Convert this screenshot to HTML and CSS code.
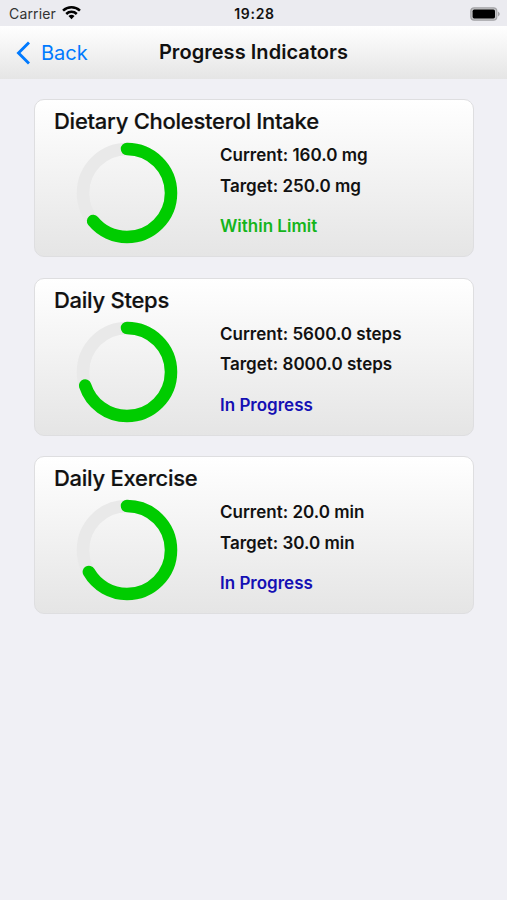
FILE: index.html
```html
<!DOCTYPE html>
<html lang="en">
<head>
    <meta charset="UTF-8">
    <meta name="viewport" content="width=device-width, initial-scale=1.0">
    <title>Progress Indicators</title>
    <link rel="stylesheet" href="styles.css">
</head>
<body>
    <div class="status-bar">
        <div class="carrier">
            <span>Carrier</span>
            <svg class="wifi" viewBox="0 0 18 14" width="19" height="15">
                <path d="M1 5.2a11.6 11.6 0 0 1 16 0M4 8.4a7.2 7.2 0 0 1 10 0" fill="none" stroke="#000" stroke-width="2.4"/>
                <path d="M9 13.4l-2.9-3a4.2 4.2 0 0 1 5.8 0z"/>
            </svg>
        </div>
        <span class="time">19:28</span>
        <svg class="battery" viewBox="0 0 30 14" width="30" height="14">
            <rect x=".8" y=".8" width="26" height="12.4" rx="3.4" fill="#c4c4c7" stroke="#a3a3a6" stroke-width="1.2"/>
            <rect x="2.6" y="2.6" width="22.4" height="8.8" rx="1.6"/>
            <path d="M28 4.6q3.6 2.4 0 4.8z" fill="#a3a3a6"/>
        </svg>
    </div>

    <header class="nav-bar">
        <a class="back" href="#">
            <svg viewBox="0 0 14 24" width="14" height="24">
                <path d="M13 1.5L2.500 12L13 22.500" fill="none" stroke="#007aff" stroke-width="2.900"/>
            </svg>
            <span>Back</span>
        </a>
        <h1>Progress Indicators</h1>
    </header>

    <main class="cards">
        <section class="card">
            <h2>Dietary Cholesterol Intake</h2>
            <div class="card-body">
                <svg class="ring" viewBox="0 0 102 102">
                    <circle class="track" cx="51" cy="51" r="44"/>
                    <circle class="progress" cx="51" cy="51" r="44" pathLength="100" stroke-dasharray="64 100"/>
                </svg>
                <div class="details">
                    <p>Current: 160.0 mg</p>
                    <p>Target: 250.0 mg</p>
                    <p class="status within-limit">Within Limit</p>
                </div>
            </div>
        </section>

        <section class="card">
            <h2>Daily Steps</h2>
            <div class="card-body">
                <svg class="ring" viewBox="0 0 102 102">
                    <circle class="track" cx="51" cy="51" r="44"/>
                    <circle class="progress" cx="51" cy="51" r="44" pathLength="100" stroke-dasharray="70 100"/>
                </svg>
                <div class="details">
                    <p>Current: 5600.0 steps</p>
                    <p>Target: 8000.0 steps</p>
                    <p class="status in-progress">In Progress</p>
                </div>
            </div>
        </section>

        <section class="card">
            <h2>Daily Exercise</h2>
            <div class="card-body">
                <svg class="ring" viewBox="0 0 102 102">
                    <circle class="track" cx="51" cy="51" r="44"/>
                    <circle class="progress" cx="51" cy="51" r="44" pathLength="100" stroke-dasharray="66.67 100"/>
                </svg>
                <div class="details">
                    <p>Current: 20.0 min</p>
                    <p>Target: 30.0 min</p>
                    <p class="status in-progress">In Progress</p>
                </div>
            </div>
        </section>
    </main>
</body>
</html>
```

FILE: styles.css
```css
* {
    box-sizing: border-box;
}

body {
    margin: 0;
    min-height: 900px;
    background-color: #f0f0f5;
    color: #111;
    font-family: Inter, "Liberation Sans", sans-serif;
}

h1, h2, p {
    margin: 0;
}

/* Status bar */
.status-bar {
    display: grid;
    grid-template-columns: 1fr auto 1fr;
    align-items: center;
    height: 26px;
    padding: 1px 7px 0 9px;
    background-color: #ebebf0;
    font-size: 14px;
}

.carrier {
    display: flex;
    align-items: center;
    gap: 6px;
    color: #333;
    letter-spacing: 0.15px;
}

.wifi {
    margin-top: -2px;
}

.time {
    font-weight: 600;
    letter-spacing: 0.7px;
}

.battery {
    justify-self: end;
}

/* Navigation bar */
.nav-bar {
    display: grid;
    grid-template-columns: 1fr auto 1fr;
    align-items: center;
    height: 53px;
    padding: 0 16px;
    background: linear-gradient(#fff, #e5e5e5);
}

.back {
    display: flex;
    align-items: center;
    gap: 11px;
    color: #007aff;
    font-size: 20px;
    text-decoration: none;
}

.nav-bar h1 {
    font-size: 20px;
    font-weight: 600;
    line-height: 26px;
    margin-top: -1px;
    letter-spacing: 0.05px;
}

/* Cards */
.cards {
    display: flex;
    flex-direction: column;
    gap: 20.5px;
    padding: 20px 33px 0 34px;
}

.card {
    height: 158px;
    padding: 8px 19px;
    border: 1px solid #dedee0;
    border-radius: 10px;
    background: linear-gradient(#fff, #e5e5e5);
}

.card h2 {
    font-size: 22px;
    font-weight: 500;
    line-height: 26px;
    letter-spacing: -0.27px;
    -webkit-text-stroke: 0.2px #111;
}

.card-body {
    display: flex;
    gap: 42px;
    padding-left: 22px;
}

.ring {
    width: 102px;
    height: 102px;
    margin-top: 8px;
    transform: rotate(-90deg);
}

.ring circle {
    fill: none;
    stroke-width: 12.5;
}

.track {
    stroke: #e9e9e9;
}

.progress {
    stroke: #00cc00;
    stroke-linecap: round;
}

.details {
    padding-top: 6px;
    font-size: 17px;
    font-weight: 600;
    line-height: 30.5px;
}

.status {
    margin-top: 10px;
}

.within-limit {
    color: #14b51b;
}

.in-progress {
    color: #1410b4;
}
```
